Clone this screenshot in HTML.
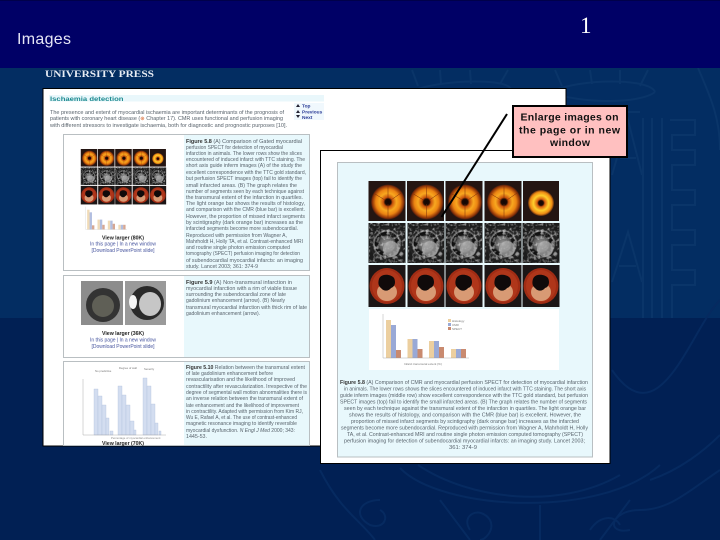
<!DOCTYPE html>
<html><head><meta charset="utf-8"><title>Images</title>
<style>
html,body{margin:0;padding:0;width:720px;height:540px;overflow:hidden;background:#012054}
svg{display:block}
text{font-family:"Liberation Sans",sans-serif}
.c{font-size:5.2px;fill:#59636c}
.r{font-size:5.2px;fill:#59636c}
.b{font-weight:bold;fill:#333}
.l{font-size:5px;fill:#47559f}
</style></head><body>
<svg width="720" height="540" viewBox="0 0 720 540" xmlns="http://www.w3.org/2000/svg">
<defs>
<filter id="s" x="-5%" y="-5%" width="110%" height="110%"><feGaussianBlur stdDeviation="0.34"/></filter>
<filter id="n" x="0" y="0" width="100%" height="100%"><feTurbulence type="fractalNoise" baseFrequency="0.3" numOctaves="2" seed="4"/><feColorMatrix values="0 0 0 0 1 0 0 0 0 1 0 0 0 0 1 3.4 0 0 0 -1.6"/><feComposite in2="SourceGraphic" operator="in"/></filter>
<radialGradient id="o"><stop offset="0" stop-color="#120604"/><stop offset=".17" stop-color="#1c0a04"/><stop offset=".27" stop-color="#c8520c"/><stop offset=".5" stop-color="#f8a820"/><stop offset=".72" stop-color="#ec8412"/><stop offset=".92" stop-color="#8c3208"/><stop offset="1" stop-color="#3a1a10"/></radialGradient>
<radialGradient id="y"><stop offset="0" stop-color="#120604"/><stop offset=".18" stop-color="#1c0a04"/><stop offset=".3" stop-color="#d85f10"/><stop offset=".58" stop-color="#ffd02c"/><stop offset=".85" stop-color="#ee8a14"/><stop offset="1" stop-color="#5a2a10"/></radialGradient>
<radialGradient id="m"><stop offset="0" stop-color="#9a9a9a"/><stop offset=".35" stop-color="#6a6a6a"/><stop offset=".46" stop-color="#555"/><stop offset=".54" stop-color="#141414"/><stop offset=".7" stop-color="#0e0e0e"/><stop offset=".76" stop-color="#777"/><stop offset=".86" stop-color="#1e1e1e"/><stop offset="1" stop-color="#262626"/></radialGradient>
<g id="hs"><rect x="-18.500" y="-20" width="37" height="40" fill="#241512"/><ellipse cx="1" cy="1" rx="17" ry="17.500" fill="url(#o)"/><path d="M1-15V-3M1 3V17M-12-7-2-1M14-8 4-1" stroke="#7a2c08" stroke-width=".5" fill="none"/></g>
<g id="hc"><rect x="-18.500" y="-20" width="37" height="40" fill="#1c1c1c"/><ellipse cx="0" cy="1" rx="17" ry="17" fill="url(#m)"/><rect x="-18" y="-20" width="36" height="40" fill="#fff" filter="url(#n)" opacity=".55"/><ellipse cx="4" cy="6" rx="8" ry="8" fill="#aaa" opacity=".75"/></g>
<g id="hr"><rect x="-18.500" y="-21" width="37" height="42" fill="#1c1616"/><ellipse cx="0" cy="0" rx="17.500" ry="18" fill="#a02c14"/><ellipse cx="0" cy="0" rx="15" ry="16" fill="#b53a1c" opacity=".7"/><ellipse cx="0" cy="6" rx="10" ry="9" fill="#d89a74"/><path d="M-8-7C-6-13 4-12 7-8 9-4 8 1 4 2 2 5-3 6-6 2-9 0-9-4-8-7Z" fill="#100a0a"/></g>
<g id="fig">
<use href="#hs" x="18" y="20"/><use href="#hs" x="56.500" y="20"/><use href="#hs" x="95" y="20"/><use href="#hs" x="134" y="20"/>
<rect x="154" y="0" width="36" height="40" fill="#241512"/><ellipse cx="172" cy="22" rx="13" ry="13" fill="url(#y)"/>
<use href="#hc" x="18" y="62"/><use href="#hc" x="57" y="62"/><use href="#hc" x="95" y="62"/><use href="#hc" x="134" y="62"/><use href="#hc" x="172" y="62"/>
<use href="#hr" x="18" y="105"/><use href="#hr" x="57" y="105"/><use href="#hr" x="95" y="105"/><use href="#hr" x="134" y="105"/><use href="#hr" x="172" y="105"/>
</g>
<g id="bars">
<rect x="17" y="11" width="5" height="38" fill="#eccf9f"/><rect x="22" y="16" width="5" height="33" fill="#99a9d6"/><rect x="27" y="41" width="5" height="8" fill="#c98a6f"/>
<rect x="38.500" y="30" width="5" height="19" fill="#eccf9f"/><rect x="43.500" y="30" width="5" height="19" fill="#99a9d6"/><rect x="48.500" y="40" width="5" height="9" fill="#c98a6f"/>
<rect x="60" y="32" width="5" height="17" fill="#eccf9f"/><rect x="65" y="32" width="5" height="17" fill="#99a9d6"/><rect x="70" y="38" width="5" height="11" fill="#c98a6f"/>
<rect x="82" y="40" width="5" height="9" fill="#eccf9f"/><rect x="87" y="40" width="5" height="9" fill="#99a9d6"/><rect x="92" y="40" width="5" height="9" fill="#c98a6f"/>
<path d="M14 5V49H100" stroke="#999" stroke-width=".4" fill="none"/>
</g>
</defs>

<rect width="720" height="540" fill="#012054"/>
<rect y="68" width="720" height="250" fill="#032d62"/>

<g fill="none" stroke="#0a3569" stroke-width="2">
<path d="M410 92C440 78 520 78 510 92M410 92C430 104 500 104 510 92M550 92C580 78 650 78 655 92M550 92C580 104 640 104 655 92"/>
<path d="M412 70 418 86M440 70 441 84M470 70 471 84M508 70 500 84M555 70 562 86M590 70 592 84M620 70 620 84M648 70 640 86"/>
<path d="M625 112H640M643 118V318M652 118V318M662 118V318M670 120H695V135H672V150H695V165H672V190H695V205H672V230H695V245H672V270H695V285H672V318"/>
<path d="M612 175 628 120 642 175M620 158H636M612 282 628 232 642 282M619 266H636"/>
<path d="M698 68C712 100 720 120 720 150"/>
</g>
<g fill="none" stroke="#07296150" stroke-width="2" style="stroke:#062a60">
<path d="M320 470C340 510 360 520 375 540M418 465C470 500 560 510 620 475M380 500C360 500 352 515 370 525 385 530 390 515 380 510M720 470C690 490 670 510 640 510 610 510 605 535 630 530M470 530C460 515 480 505 490 520 495 530 485 540 480 540M540 505V540M590 530C600 515 615 515 620 525M650 480C680 470 705 450 720 435M612 370C660 440 690 330 720 300"/>
<path d="M400 468C440 510 600 520 660 465M440 500 470 540M630 500 600 540"/>
</g>

<!-- Left page -->
<rect x="43" y="88.500" width="523" height="357.500" fill="#fff" stroke="#000" stroke-width="1"/>
<rect x="49" y="95" width="275" height="6.500" fill="#e9f7fb"/>
<rect x="294" y="103" width="30" height="17" fill="#f0f8fd"/>
<g filter="url(#s)">
<text x="50" y="101" font-size="6.500" font-weight="bold" fill="#1f8a90" textLength="73.500" lengthAdjust="spacingAndGlyphs">Ischaemia detection</text>
<text x="50" y="114" class="c" textLength="234" lengthAdjust="spacingAndGlyphs">The presence and extent of myocardial ischaemia are important determinants of the prognosis of</text>
<text x="50" y="120" class="c" textLength="233" lengthAdjust="spacingAndGlyphs">patients with coronary heart disease (<tspan fill="#d8632a">⊕</tspan> Chapter 17). CMR uses functional and perfusion imaging</text>
<text x="50" y="127" class="c" textLength="237" lengthAdjust="spacingAndGlyphs">with different stressors to investigate ischaemia, both for diagnostic and prognostic purposes [10].</text>
<path d="M296 107h4l-2-3zM296 113h4l-2-3zM296 115h4l-2 3z" fill="#223"/>
<text x="302" y="107.500" font-size="4.800" fill="#2b3c96" font-weight="bold">Top</text>
<text x="302" y="113.500" font-size="4.800" fill="#2b3c96" font-weight="bold">Previous</text>
<text x="302" y="119" font-size="4.800" fill="#2b3c96" font-weight="bold">Next</text>
</g>

<!-- Figure 1 -->
<rect x="63.500" y="134.500" width="246" height="136" fill="#fff" stroke="#b9bfc2"/>
<rect x="184" y="135" width="125" height="135" fill="#e8f8fc"/>
<g transform="translate(81 149) scale(.447 .44)"><use href="#fig"/></g>
<g transform="translate(79 204) scale(.48 .52)" opacity=".75"><rect x="0" y="5" width="100" height="50" fill="#fff"/><use href="#bars"/></g>
<g filter="url(#s)">
<text x="123" y="239.500" font-size="5.200" text-anchor="middle" fill="#222" font-weight="bold">View larger (80K)</text>
<text x="123" y="245.500" class="l" text-anchor="middle" textLength="66">In this page | In a new window</text>
<text x="123" y="252" class="l" text-anchor="middle" textLength="63">[Download PowerPoint slide]</text>
<text x="186" y="143" class="c" textLength="116" lengthAdjust="spacingAndGlyphs"><tspan class="b">Figure 5.8</tspan> (A) Comparison of Gated myocardial</text>
<text x="186" y="149" class="c" textLength="97" lengthAdjust="spacingAndGlyphs">perfusion SPECT for detection of myocardial</text>
<text x="186" y="155" class="c" textLength="116" lengthAdjust="spacingAndGlyphs">infarction in animals. The lower rows show the slices</text>
<text x="186" y="161" class="c" textLength="119" lengthAdjust="spacingAndGlyphs">encountered of induced infarct with TTC staining. The</text>
<text x="186" y="167" class="c" textLength="116" lengthAdjust="spacingAndGlyphs">short axis guide inferm images (A) of the study the</text>
<text x="186" y="174" class="c" textLength="120" lengthAdjust="spacingAndGlyphs">excellent correspondence with the TTC gold standard,</text>
<text x="186" y="180" class="c" textLength="116" lengthAdjust="spacingAndGlyphs">but perfusion SPECT images (top) fail to identify the</text>
<text x="186" y="187" class="c" textLength="111" lengthAdjust="spacingAndGlyphs">small infarcted areas. (B) The graph relates the</text>
<text x="186" y="193" class="c" textLength="118" lengthAdjust="spacingAndGlyphs">number of segments seen by each technique against</text>
<text x="186" y="199" class="c" textLength="117" lengthAdjust="spacingAndGlyphs">the transmural extent of the infarction in quartiles.</text>
<text x="186" y="205" class="c" textLength="119" lengthAdjust="spacingAndGlyphs">The light orange bar shows the results of histology,</text>
<text x="186" y="211" class="c" textLength="119" lengthAdjust="spacingAndGlyphs">and comparison with the CMR (blue bar) is excellent.</text>
<text x="186" y="218" class="c" textLength="119" lengthAdjust="spacingAndGlyphs">However, the proportion of missed infarct segments</text>
<text x="186" y="224" class="c" textLength="117" lengthAdjust="spacingAndGlyphs">by scintigraphy (dark orange bar) increases as the</text>
<text x="186" y="230" class="c" textLength="112" lengthAdjust="spacingAndGlyphs">infarcted segments become more subendocardial.</text>
<text x="186" y="237" class="c" textLength="101" lengthAdjust="spacingAndGlyphs">Reproduced with permission from Wagner A,</text>
<text x="186" y="243" class="c" textLength="117" lengthAdjust="spacingAndGlyphs">Mahrholdt H, Holly TA, et al. Contrast-enhanced MRI</text>
<text x="186" y="249" class="c" textLength="104" lengthAdjust="spacingAndGlyphs">and routine single photon emission computed</text>
<text x="186" y="255" class="c" textLength="114" lengthAdjust="spacingAndGlyphs">tomography (SPECT) perfusion imaging for detection</text>
<text x="186" y="262" class="c" textLength="117" lengthAdjust="spacingAndGlyphs">of subendocardial myocardial infarcts: an imaging</text>
<text x="186" y="268" class="c" textLength="72" lengthAdjust="spacingAndGlyphs">study. Lancet 2003; 361: 374-9</text>
</g>

<!-- Figure 2 -->
<rect x="63.500" y="275.500" width="246" height="82" fill="#fff" stroke="#b9bfc2"/>
<rect x="184" y="276" width="125" height="81" fill="#e8f8fc"/>
<rect x="81" y="281" width="42" height="44" fill="#8c8c8c"/>
<rect x="125" y="281" width="41" height="44" fill="#9a9a9a"/>
<circle cx="103" cy="305" r="17" fill="#333"/><circle cx="103" cy="306" r="11" fill="#5f5f56"/>
<circle cx="147" cy="303" r="17" fill="#2a2a2a"/><ellipse cx="150" cy="304" rx="11" ry="12" fill="#c6c6c6"/><ellipse cx="133" cy="302" rx="4" ry="7" fill="#f4f4f4"/>
<g filter="url(#s)">
<text x="123" y="335" font-size="5.200" text-anchor="middle" fill="#222" font-weight="bold">View larger (36K)</text>
<text x="123" y="341.500" class="l" text-anchor="middle" textLength="66">In this page | In a new window</text>
<text x="123" y="348" class="l" text-anchor="middle" textLength="63">[Download PowerPoint slide]</text>
<text x="186" y="284" class="c" textLength="106" lengthAdjust="spacingAndGlyphs"><tspan class="b">Figure 5.9</tspan> (A) Non-transmural infarction in</text>
<text x="186" y="290" class="c" textLength="111" lengthAdjust="spacingAndGlyphs">myocardial infarction with a rim of viable tissue</text>
<text x="186" y="296" class="c" textLength="100" lengthAdjust="spacingAndGlyphs">surrounding the subendocardial zone of late</text>
<text x="186" y="302" class="c" textLength="99" lengthAdjust="spacingAndGlyphs">gadolinium enhancement (arrow). (B) Nearly</text>
<text x="186" y="309" class="c" textLength="121" lengthAdjust="spacingAndGlyphs">transmural myocardial infarction with thick rim of late</text>
<text x="186" y="315" class="c" textLength="74" lengthAdjust="spacingAndGlyphs">gadolinium enhancement (arrow).</text>
</g>

<!-- Figure 3 -->
<rect x="63.500" y="361.500" width="246" height="84" fill="#fff" stroke="#b9bfc2"/>
<rect x="184" y="362" width="125" height="83" fill="#e8f8fc"/>
<g fill="#d3ddf0" stroke="#a9b8d6" stroke-width=".3">
<rect x="94" y="389" width="4" height="46"/><rect x="98" y="396" width="4" height="39"/><rect x="102" y="405" width="4" height="30"/><rect x="106" y="418" width="3" height="17"/><rect x="110" y="431" width="3" height="4"/>
<rect x="118" y="386" width="4" height="49"/><rect x="122" y="395" width="4" height="40"/><rect x="126" y="405" width="4" height="30"/><rect x="130" y="421" width="4" height="14"/><rect x="134" y="430" width="2" height="5"/>
<rect x="143" y="378" width="4" height="57"/><rect x="147" y="386" width="4" height="49"/><rect x="151" y="404" width="4" height="31"/><rect x="155" y="423" width="3" height="12"/><rect x="159" y="431" width="2" height="4"/>
</g>
<path d="M83 379V435H166" stroke="#999" stroke-width=".4" fill="none"/>
<g filter="url(#s)">
<text x="95" y="372" font-size="2.800" fill="#777">No predictive</text><text x="119" y="369" font-size="2.800" fill="#777">Degree of wall</text><text x="144" y="370" font-size="2.800" fill="#777">Severity</text>
<text x="111" y="439" font-size="2.800" fill="#888">Percentage of myocardial enhancement</text>
<text x="123" y="445" font-size="5.200" text-anchor="middle" fill="#222" font-weight="bold">View larger (70K)</text>
<text x="186" y="369" class="c" textLength="119" lengthAdjust="spacingAndGlyphs"><tspan class="b">Figure 5.10</tspan> Relation between the transmural extent</text>
<text x="186" y="375" class="c" textLength="87" lengthAdjust="spacingAndGlyphs">of late gadolinium enhancement before</text>
<text x="186" y="381" class="c" textLength="109" lengthAdjust="spacingAndGlyphs">revascularisation and the likelihood of improved</text>
<text x="186" y="388" class="c" textLength="121" lengthAdjust="spacingAndGlyphs">contractility after revascularization. Irrespective of the</text>
<text x="186" y="394" class="c" textLength="121" lengthAdjust="spacingAndGlyphs">degree of segmental wall motion abnormalities there is</text>
<text x="186" y="400" class="c" textLength="117" lengthAdjust="spacingAndGlyphs">an inverse relation between the transmural extent of</text>
<text x="186" y="407" class="c" textLength="113" lengthAdjust="spacingAndGlyphs">late enhancement and the likelihood of improvement</text>
<text x="186" y="413" class="c" textLength="117" lengthAdjust="spacingAndGlyphs">in contractility. Adapted with permission from Kim RJ,</text>
<text x="186" y="419" class="c" textLength="111" lengthAdjust="spacingAndGlyphs">Wu E, Rafael A, et al. The use of contrast-enhanced</text>
<text x="186" y="425" class="c" textLength="111" lengthAdjust="spacingAndGlyphs">magnetic resonance imaging to identify reversible</text>
<text x="186" y="432" class="c" textLength="109" lengthAdjust="spacingAndGlyphs">myocardial dysfunction. <tspan font-style="italic">N Engl J Med</tspan> 2000; 343:</text>
<text x="186" y="438" class="c" textLength="21" lengthAdjust="spacingAndGlyphs">1445-53.</text>
</g>

<!-- Header -->
<rect width="720" height="68" fill="#000066"/>
<rect width="720" height="1" fill="#00004a"/>
<text x="17" y="44" font-size="16" fill="#e6e6f6" textLength="54" lengthAdjust="spacing">Images</text>
<text x="580" y="33" font-size="23" fill="#fff" style="font-family:'Liberation Serif',serif">1</text>
<text x="45" y="77" font-size="9" font-weight="bold" fill="#e8ecf4" style="font-family:'Liberation Serif',serif" textLength="109" lengthAdjust="spacingAndGlyphs">UNIVERSITY PRESS</text>

<!-- Right page -->
<rect x="320.500" y="150.500" width="289.500" height="313" fill="#fff" stroke="#000" stroke-width="1"/>
<rect x="337.500" y="162.500" width="255" height="294.500" fill="#e8f8fc" stroke="#b9bfc2"/>
<g transform="translate(369 181)"><use href="#fig"/></g>
<rect x="369" y="309" width="190" height="61" fill="#fff"/>
<g transform="translate(369 309)"><use href="#bars"/></g>
<g filter="url(#s)">
<rect x="448" y="319" width="3" height="3" fill="#eccf9f"/><rect x="448" y="323" width="3" height="3" fill="#99a9d6"/><rect x="448" y="327" width="3" height="3" fill="#c98a6f"/>
<text x="452" y="322" font-size="3" fill="#777">Histology</text><text x="452" y="326" font-size="3" fill="#777">CMR</text><text x="452" y="330" font-size="3" fill="#777">SPECT</text>
<text x="404" y="365" font-size="3" fill="#777">Infarct transmural extent (%)</text>
<text x="340" y="384" class="r" textLength="248" lengthAdjust="spacingAndGlyphs"><tspan class="b">Figure 5.8</tspan> (A) Comparison of CMR and myocardial perfusion SPECT for detection of myocardial infarction</text>
<text x="344" y="390.500" class="r" textLength="242" lengthAdjust="spacingAndGlyphs">in animals. The lower rows shows the slices encountered of induced infarct with TTC staining. The short axis</text>
<text x="340" y="397" class="r" textLength="248" lengthAdjust="spacingAndGlyphs">guide inferm images (middle row) show excellent correspondence with the TTC gold standard, but perfusion</text>
<text x="340" y="403.500" class="r" textLength="247" lengthAdjust="spacingAndGlyphs">SPECT images (top) fail to identify the small infarcted areas. (B) The graph relates the number of segments</text>
<text x="344" y="410" class="r" textLength="242" lengthAdjust="spacingAndGlyphs">seen by each technique against the transmural extent of the infarction in quartiles. The light orange bar</text>
<text x="349" y="416.500" class="r" textLength="232" lengthAdjust="spacingAndGlyphs">shows the results of histology, and comparison with the CMR (blue bar) is excellent. However, the</text>
<text x="351" y="423" class="r" textLength="228" lengthAdjust="spacingAndGlyphs">proportion of missed infarct segments by scintigraphy (dark orange bar) increases as the infarcted</text>
<text x="341" y="429.500" class="r" textLength="247" lengthAdjust="spacingAndGlyphs">segments become more subendocardial. Reproduced with permission from Wagner A, Mahrholdt H, Holly</text>
<text x="347" y="436" class="r" textLength="236" lengthAdjust="spacingAndGlyphs">TA, et al. Contrast-enhanced MRI and routine single photon emission computed tomography (SPECT)</text>
<text x="344" y="442.500" class="r" textLength="241" lengthAdjust="spacingAndGlyphs">perfusion imaging for detection of subendocardial myocardial infarcts: an imaging study. Lancet 2003;</text>
<text x="449" y="449" class="r" textLength="28" lengthAdjust="spacingAndGlyphs">361: 374-9</text>
</g>

<!-- Callout -->
<path d="M507 114 441.500 217" stroke="#000" stroke-width="2" fill="none"/>
<rect x="513" y="106" width="114" height="51" fill="#ffc0c0" stroke="#000" stroke-width="2"/>
<g font-size="10.500" font-weight="bold" fill="#111" text-anchor="middle">
<text x="569.500" y="120.500" textLength="98" lengthAdjust="spacing">Enlarge images on</text>
<text x="569.500" y="133.500" textLength="101" lengthAdjust="spacing">the page or in  new</text>
<text x="570" y="146" textLength="40" lengthAdjust="spacing">window</text>
</g>
</svg>
</body></html>
